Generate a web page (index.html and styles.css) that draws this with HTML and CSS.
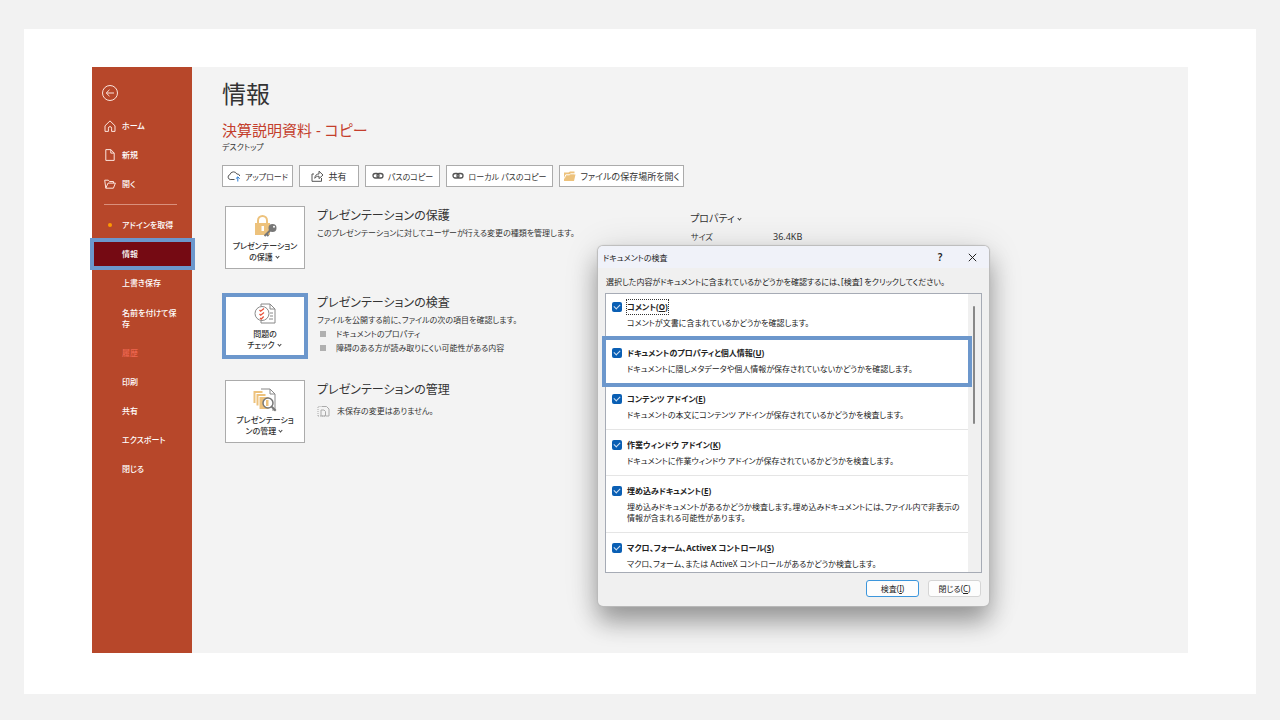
FILE: index.html
```html
<!DOCTYPE html>
<html lang="ja">
<head>
<meta charset="utf-8">
<title>情報</title>
<link rel="stylesheet" href="styles.css">
</head>
<body>
<div class="frame">
<div class="app">
  <nav class="side">
    <button class="back" aria-label="戻る"><svg width="18" height="18" viewBox="0 0 18 18"><circle cx="9" cy="9" r="7.5"/><path d="M13 9H5.5M8.5 5.8 5.2 9l3.3 3.2"/></svg></button>
    <a class="item" href="#"><svg width="12" height="12" viewBox="0 0 12 12"><path d="M1 5.8 6 .9l5 4.9v5.6H7.600V8.200a1.600 1.600 0 0 0-3.200 0v3.200H1z"/></svg>ホーム</a>
    <a class="item" href="#"><svg width="12" height="12" viewBox="0 0 12 12"><path d="M1.800.6h5l3.400 3.500v7.300H1.800zM6.800.6v3.500h3.400"/></svg>新規</a>
    <a class="item" href="#"><svg width="12" height="12" viewBox="0 0 12 12"><path d="M1.800 10.200.7 2.200h3.600l1.200 1.300h4v1.600M1.800 10.200h7.600l2-5.100H4z"/></svg>開く</a>
    <hr>
    <a class="item plain" href="#"><span class="dot"></span>アドインを取得</a>
    <a class="item plain current" href="#">情報</a>
    <a class="item plain" href="#">上書き保存</a>
    <a class="item plain two" href="#">名前を付けて保<br>存</a>
    <a class="item plain off" href="#">履歴</a>
    <a class="item plain" href="#">印刷</a>
    <a class="item plain" href="#">共有</a>
    <a class="item plain" href="#">エクスポート</a>
    <a class="item plain" href="#">閉じる</a>
  </nav>
  <main class="main">
    <h1>情報</h1>
    <h2 class="doc">決算説明資料 - コピー</h2>
    <p class="place">デスクトップ</p>
    <div class="tools">
      <button class="t1"><svg width="14" height="12" viewBox="0 0 14 12"><path d="M7.500 9.500H3.200A2.500 2.500 0 0 1 3 4.600 3.600 3.600 0 0 1 9.800 4a2.700 2.700 0 0 1 3 2"/><path class="up" d="M10.800 11.500V7M8.900 8.700l1.900-1.900 1.900 1.900"/></svg>アップロード</button>
      <button class="t2"><svg width="13" height="12" viewBox="0 0 13 12"><path d="M3 4H1v7.300h9.500V8M3.800 8.300C4 5.500 5.500 4 8 3.900V1.200l4 3.800-4 3.600V6.200C6 6.200 4.800 6.800 3.800 8.300z"/></svg>共有</button>
      <button class="t3"><svg width="12" height="8" viewBox="0 0 12 8"><g class="link"><rect x="1" y="1.500" width="6" height="4.500" rx="2.200"/><rect x="5" y="1.500" width="6" height="4.500" rx="2.200"/></g></svg>パスのコピー</button>
      <button class="t4"><svg width="12" height="8" viewBox="0 0 12 8"><g class="link"><rect x="1" y="1.500" width="6" height="4.500" rx="2.200"/><rect x="5" y="1.500" width="6" height="4.500" rx="2.200"/></g></svg>ローカル パスのコピー</button>
      <button class="t5"><svg width="13" height="12" viewBox="0 0 13 12"><path class="gold" d="M1 11V2.500h4.500L7 1.500h4.500V4.500h1L11 11z"/><path class="crease" d="M1.300 8.500 2.800 4.800h3.700l1-1H12"/></svg>ファイルの保存場所を開く</button>
    </div>
    <div class="columns">
      <div class="cards">
        <section class="card">
          <button class="tile"><svg width="24" height="24" viewBox="0 0 24 24"><path class="shackle" d="M5 10V6.500a4.500 4.500 0 0 1 9 0V10"/><rect class="gold" x="2" y="9" width="15" height="12"/><path class="hole" d="M8.500 12h2.500v5H8.500z"/><circle class="key" cx="19.500" cy="14" r="4"/><path class="keyshaft" d="m17.500 16-6 6M13.500 20l2 2"/><circle class="hole" cx="21" cy="12.800" r="1"/></svg><span>プレゼンテーション<br>の保護 <i class="chev"></i></span></button>
          <div><h3>プレゼンテーションの保護</h3><p>このプレゼンテーションに対してユーザーが行える変更の種類を管理します。</p></div>
        </section>
        <section class="card">
          <button class="tile marked"><svg width="24" height="24" viewBox="0 0 24 24"><path class="gray" d="M8 4V2h9l5 5v14H8v-3M17 2v5h5M17 11h3M17 14h3M16 17h4"/><circle class="disc" cx="9" cy="11.500" r="7"/><path class="red" d="m6.500 8 1.200 1.200L11 6.500M6.500 12l1.200 1.200L11 10.500M7 16l1.200 1 2.500-2.500"/></svg><span>問題の<br>チェック <i class="chev"></i></span></button>
          <div><h3>プレゼンテーションの検査</h3><p>ファイルを公開する前に、ファイルの次の項目を確認します。</p>
            <ul><li>ドキュメントのプロパティ</li><li>障碍のある方が読み取りにくい可能性がある内容</li></ul></div>
        </section>
        <section class="card">
          <button class="tile"><svg width="24" height="24" viewBox="0 0 24 24"><path class="gray" d="M8 1h9l5 5v16h-3M17 1v5h5"/><path class="stack" d="M1.500 15V4h8M4.500 17.500V7h8"/><path class="gold" d="M6.500 9h9v12h-9z"/><circle class="lens" cx="15" cy="15" r="5"/><path class="gold" d="M13 12h2.500v6H13z"/><path class="handle" d="m18.700 18.700 4 4"/></svg><span>プレゼンテーショ<br>ンの管理 <i class="chev"></i></span></button>
          <div><h3>プレゼンテーションの管理</h3><p class="none"><svg width="13" height="12" viewBox="0 0 13 12"><path class="faint" d="M5 1.500h4.500l2.500 2.500v7H9"/><path class="faint dash" d="M1 11V1.500h4M1 11h7"/><path class="faint" d="M4 5h3l1.500 1.500V11H4z"/></svg>未保存の変更はありません。</p></div>
        </section>
      </div>
      <dl class="props">
        <dt class="head">プロパティ <i class="chev"></i></dt>
        <div><dt>サイズ</dt><dd>36.4KB</dd></div>
      </dl>
    </div>
  </main>
  <div class="dialog" role="dialog" aria-labelledby="dt">
    <header><span id="dt">ドキュメントの検査</span><button class="help">?</button><button class="x" aria-label="閉じる"><svg width="9" height="9" viewBox="0 0 9 9"><path d="m.8.800 7.400 7.400M8.200.800.800 8.200"/></svg></button></header>
    <p class="lead">選択した内容がドキュメントに含まれているかどうかを確認するには、[検査] をクリックしてください。</p>
    <div class="listbox">
      <div class="rows">
        <div class="row"><input type="checkbox" id="c1" checked><label class="focus" for="c1">コメント(<u>O</u>)</label><p>コメントが文書に含まれているかどうかを確認します。</p></div>
        <div class="row"><input type="checkbox" id="c2" checked><label for="c2">ドキュメントのプロパティと個人情報(<u>U</u>)</label><p>ドキュメントに隠しメタデータや個人情報が保存されていないかどうかを確認します。</p></div>
        <div class="row"><input type="checkbox" id="c3" checked><label for="c3">コンテンツ アドイン(<u>E</u>)</label><p>ドキュメントの本文にコンテンツ アドインが保存されているかどうかを検査します。</p></div>
        <div class="row"><input type="checkbox" id="c4" checked><label for="c4">作業ウィンドウ アドイン(<u>K</u>)</label><p>ドキュメントに作業ウィンドウ アドインが保存されているかどうかを検査します。</p></div>
        <div class="row"><input type="checkbox" id="c5" checked><label for="c5">埋め込みドキュメント(<u>E</u>)</label><p>埋め込みドキュメントがあるかどうか検査します。埋め込みドキュメントには、ファイル内で非表示の<br>情報が含まれる可能性があります。</p></div>
        <div class="row"><input type="checkbox" id="c6" checked><label for="c6">マクロ、フォーム、ActiveX コントロール(<u>S</u>)</label><p>マクロ、フォーム、または ActiveX コントロールがあるかどうか検査します。</p></div>
      </div>
      <div class="track"><div class="thumb"></div></div>
      <div class="highlight"></div>
    </div>
    <footer><button class="primary">検査(<u>I</u>)</button><button>閉じる(<u>C</u>)</button></footer>
  </div>
</div>
</div>
</body>
</html>
```
FILE: styles.css
```css
* { box-sizing: border-box; margin: 0; padding: 0; }
body {
  min-height: 100vh; display: flex; padding: 29px 24px 26px; background: #f2f2f2;
  font-family: "Noto Sans", "Noto Sans CJK JP", sans-serif; font-size: 8px; color: #333;
  font-feature-settings: "palt"; white-space: nowrap;
}
button { font: inherit; font-feature-settings: inherit; color: inherit; background: #fff; border: 1px solid #ababab; white-space: nowrap; }
a { color: inherit; text-decoration: none; }
svg { flex: none; fill: none; stroke-width: 1; }
.frame { flex: 1; display: flex; background: #fff; padding: 38px 68px 41px; }
.app { flex: 1; display: flex; position: relative; background: #f3f3f3; }

.side { width: 100px; flex: none; background: #b7472a; color: #fff; padding-top: 17px; }
.side svg { stroke: #fbe4dd; }
.back { display: block; margin-left: 9px; margin-bottom: 9px; width: 18px; height: 18px; background: none; border: 0; }
.back svg { display: block; }
.item { display: flex; align-items: center; gap: 6px; height: 29px; padding-left: 12px; line-height: 11px; font-weight: 500; position: relative; }
.plain { padding-left: 30px; }
.two { height: 41px; }
.off { color: #ee6650; }
.side hr { border: 0; border-top: 1px solid #d9907c; margin: 6px 15px 5px 12px; }
.dot { position: absolute; left: 16px; width: 4px; height: 4px; border-radius: 2px; background: #ff9a00; }
.current { background: #750a13; }
.current::after { content: ""; position: absolute; inset: -1px -3px -2px -2px; border: 4px solid #6c97cc; }

.main { flex: 1; padding: 11px 0 0 30px; }
h1 { font-size: 24px; line-height: 32px; font-weight: 400; }
.doc { font-size: 15px; line-height: 20px; font-weight: 400; color: #c43e2c; margin-top: 10px; }
.place { line-height: 14px; }
.tools { display: flex; gap: 6px; margin: 11px 0 19px; }
.tools button { height: 22px; display: flex; align-items: center; justify-content: center; gap: 4px; }
.tools svg { stroke: #555; }
.tools .up { stroke: #2b7cd3; }
.tools .gold { stroke: none; }
.tools .crease { stroke: #fff; }
.link { stroke-width: 1.3; }
.t1 { width: 71px; } .t2 { width: 60px; } .t3 { width: 75px; } .t4 { width: 107px; } .t5 { width: 125px; }
.tools .t2, .tools .t5 { font-size: 9px; }
.columns { display: flex; }
.cards { width: 468px; padding-left: 3px; display: flex; flex-direction: column; gap: 24px; }
.card { display: flex; gap: 12px; height: 63px; line-height: 14px; }
.tile { width: 80px; flex: none; display: flex; flex-direction: column; align-items: center; justify-content: center; font-weight: 500; line-height: 11px; gap: 2px; }
.marked { height: 60px; margin-top: 3px; outline: 4px solid #6c97cc; outline-offset: -1px; border-color: #fff; }
.chev { display: inline-block; width: 3px; height: 3px; border: solid #444; border-width: 0 1px 1px 0; transform: rotate(45deg); margin: 0 2px 2px 1px; }
.gold { fill: #edc27c; }
.shackle { stroke: #edc27c; stroke-width: 2; }
.hole { fill: #fff; }
.key { fill: #777; }
.keyshaft { stroke: #777; stroke-width: 2; }
.gray { stroke: #888; }
.disc { fill: #fff; stroke: #888; }
.red { stroke: #e8523a; stroke-width: 1.3; }
.stack { stroke: #edc27c; stroke-width: 2; }
.lens { fill: #fff; stroke: #777; stroke-width: 1.5; }
.handle { stroke: #777; stroke-width: 2; }
.faint { stroke: #aaa; }
.dash { stroke-dasharray: 1 1; }
h3 { font-size: 12px; line-height: 20px; font-weight: 400; }
ul { list-style: none; }
li { display: flex; align-items: center; gap: 10px; padding-left: 3px; height: 14px; }
li::before { content: ""; width: 6px; height: 6px; background: #b0b0b0; }
.none { display: flex; align-items: center; gap: 7px; height: 22px; }
.props { padding-top: 3px; }
.props .head { font-size: 10px; line-height: 18px; }
.props div { display: flex; font-size: 9px; line-height: 20px; padding-left: 1px; }
.props div dt { width: 82px; font-size: 8px; }

.dialog { position: absolute; left: 506px; top: 179px; width: 391px; background: #f0f0f0; border-radius: 5px; color: #222;
  box-shadow: 0 0 1px 1px #bbb, 0 16px 24px rgba(0,0,0,.32), 0 4px 36px rgba(0,0,0,.14); }
.dialog header { height: 22px; display: flex; align-items: center; background: #f0f2f9; border-radius: 5px 5px 0 0; padding: 0 11px 0 5px; }
.dialog header span { flex: 1; }
.dialog header button { border: 0; background: none; width: 10px; height: 14px; line-height: 14px; }
.dialog .help { font-size: 10px; font-weight: 600; margin-right: 23px; }
.x { display: flex; align-items: center; }
.x svg { stroke: #222; display: block; }
.lead { padding-left: 8px; line-height: 14px; margin: 7px 0 4px; }
.listbox { position: relative; margin: 0 7px; height: 280px; display: flex; border: 1px solid #a6abb5; background: #fff; }
.rows { flex: 1; overflow: hidden; }
.row { display: grid; grid-template-columns: 10px 1fr; column-gap: 5px; row-gap: 3px; align-items: center; justify-items: start; padding: 8px 0 9px 6px; border-bottom: 1px solid #e5e5e5; }
.row:first-child { padding-top: 6px; }
.row label { font-weight: 700; line-height: 14px; }
.row .focus { outline: 1px dotted #333; }
.row p { grid-column: 2; line-height: 11px; }
.row input { appearance: none; width: 10px; height: 10px; border-radius: 2px; background: #0a5fb4; display: grid; place-items: center; }
.row input::after { content: ""; width: 5px; height: 3px; border: solid #cfe0f3; border-width: 0 0 1px 1px; transform: rotate(-45deg); margin-bottom: 2px; }
.track { width: 13px; background: #f0f0f0; padding: 12px 0 0 5px; }
.thumb { width: 2px; height: 118px; background: #888; border-radius: 1px; }
.highlight { position: absolute; left: -4px; top: 42px; right: 9px; height: 51px; border: 4px solid #6c97cc; }
.dialog footer { display: flex; justify-content: flex-end; gap: 9px; padding: 7px 8px 9px; }
.dialog footer button { width: 53px; height: 17px; border: 1px solid #d5d5d5; border-radius: 3px; background: #fdfdfd; line-height: 14px; }
.dialog footer .primary { border-color: #3c96dc; }
```
